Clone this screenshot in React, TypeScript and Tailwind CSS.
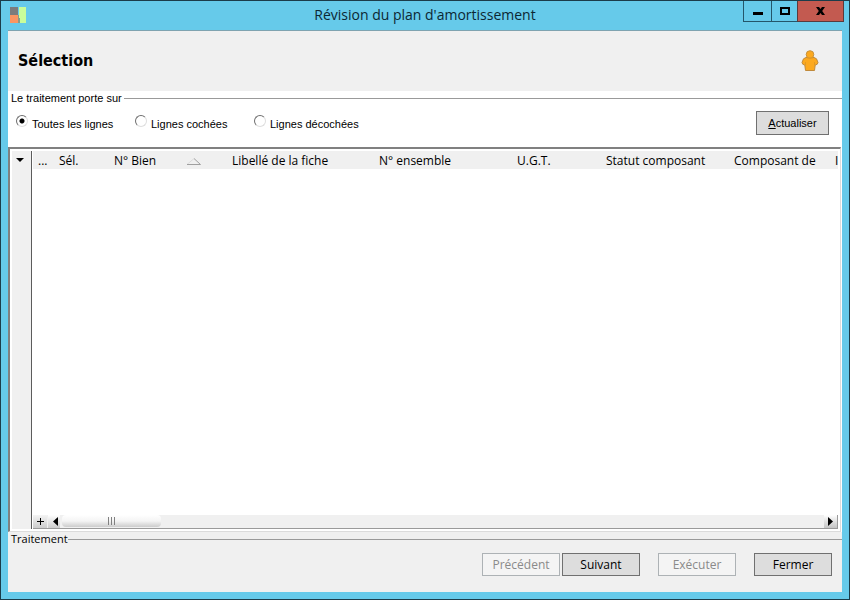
import { useState } from "react";
import type { ReactNode } from "react";

type WizardButtonProps = {
  children: ReactNode;
  disabled?: boolean;
};

const scopes = [
  { value: "all", label: "Toutes les lignes" },
  { value: "checked", label: "Lignes cochées" },
  { value: "unchecked", label: "Lignes décochées" },
];

const columns = [
  { label: "...", width: "w-[21px]" },
  { label: "Sél.", width: "w-[55px]" },
  { label: "N° Bien", width: "w-[118px]", sorted: true },
  { label: "Libellé de la fiche", width: "w-[147px]" },
  { label: "N° ensemble", width: "w-[138px]" },
  { label: "U.G.T.", width: "w-[89px]" },
  { label: "Statut composant", width: "w-[128px]" },
  { label: "Composant de", width: "w-[101px]" },
  { label: "I", width: "w-[100px]" },
];

function WizardButton({ children, disabled = false }: WizardButtonProps) {
  return (
    <button
      type="button"
      disabled={disabled}
      className="h-[23px] w-[78px] border border-[#707070] bg-[#dddddd] text-xs leading-4 text-black disabled:border-[#adb2b5] disabled:bg-[#f4f4f4] disabled:text-[#8a8a8a]"
    >
      {children}
    </button>
  );
}

function TitleBar() {
  return (
    <header className="grid h-[29px] grid-cols-[1fr_auto_1fr] items-start">
      <svg width="16" height="16" viewBox="0 0 16 16" className="mt-1.5 ml-[9px]" aria-hidden="true">
        <rect width="8" height="8" fill="#7c7c7c" />
        <rect y="8" width="8" height="8" fill="#fb9562" />
        <path d="M9 0h7v16h-6V11H9z" fill="#c9fd9a" />
        <path d="M8 8h1v3h1v5H8z" fill="#8d9a86" />
      </svg>

      <h1 className="pt-1 text-sm leading-5 text-[#0c2733]">
        Révision du plan d'amortissement
      </h1>

      <div className="mr-[5px] flex justify-end">
        <button type="button" aria-label="Réduire" className="flex h-[21px] w-[29px] justify-center border border-t-0 border-[#24566a]">
          <svg width="10" height="21" viewBox="0 0 10 21" aria-hidden="true">
            <path d="M0 11h10v3H0z" fill="#000" />
          </svg>
        </button>
        <button type="button" aria-label="Agrandir" className="flex h-[21px] w-[25px] justify-center border-b border-[#24566a]">
          <svg width="10" height="21" viewBox="0 0 10 21" aria-hidden="true">
            <path d="M0 6h10v8H0zM2 8v4h6V8z" fill="#000" fillRule="evenodd" />
          </svg>
        </button>
        <button type="button" aria-label="Fermer la fenêtre" className="flex h-[21px] w-[47px] justify-center border border-t-0 border-[#5a3a3c] bg-[#c35a50]">
          <svg width="9" height="21" viewBox="0 0 9 21" aria-hidden="true">
            <path d="M0 6h3l1.500 2L6 6h3L6.200 10 9 14H6l-1.500-2L3 14H0l2.800-4z" fill="#000" />
          </svg>
        </button>
      </div>
    </header>
  );
}

function UserIcon() {
  return (
    <svg width="18" height="22" viewBox="0 0 18 22" aria-hidden="true">
      <path
        d="M5 7.500L2.500 8.800 1 12.500l.8 1.800 2 .7.7 5.500h9l.7-5.500 2-.7.8-1.800-1.500-3.700L13 7.500z"
        fill="#fca91f"
        stroke="#c08a3c"
      />
      <circle cx="9" cy="4.500" r="3.800" fill="#fca91f" stroke="#c8923c" />
      <path d="M6 8h6" stroke="#e59a20" />
      <path d="M4.500 12v3M13.500 12v3" stroke="#e09a28" fill="none" />
    </svg>
  );
}

function ScopeSelector() {
  const [scope, setScope] = useState("all");

  return (
    <fieldset className="min-w-0 border-t border-[#9a9a9a] font-['Liberation_Sans',sans-serif] text-[11px] leading-[14px]">
      <legend className="pr-0.5 pl-[3px]">Le traitement porte sur</legend>

      <div className="flex items-start justify-between pt-1.5 pr-[13px] pb-3 pl-2">
        <div className="flex pt-1">
          {scopes.map(({ value, label }) => (
            <label key={value} className="flex w-[119px] items-start gap-1">
              <input
                type="radio"
                name="scope"
                value={value}
                checked={scope === value}
                onChange={() => setScope(value)}
                className="h-3 w-3 shrink-0 appearance-none rounded-full border border-t-[#6e6e6e] border-r-[#dedede] border-b-[#dedede] border-l-[#6e6e6e] bg-white checked:bg-[radial-gradient(circle,#000_2px,#fff_3px)]"
              />
              <span className="pt-0.5 whitespace-nowrap">{label}</span>
            </label>
          ))}
        </div>

        <button type="button" className="h-6 w-[73px] border border-[#707070] bg-[#dddddd]">
          <span className="underline">A</span>ctualiser
        </button>
      </div>
    </fieldset>
  );
}

function ScrollBar() {
  return (
    <div className="flex h-3.5 border-b border-[#9a9a9a] bg-[#f0f0f0]">
      <button type="button" aria-label="Ajouter" className="flex w-3.5 items-center justify-center bg-linear-to-b from-[#f4f4f4] to-[#cccccc]">
        <svg width="7" height="7" viewBox="0 0 7 7" aria-hidden="true">
          <path d="M3 0h1v3h3v1H4v3H3V4H0V3h3z" fill="#000" />
        </svg>
      </button>
      <button type="button" aria-label="Défiler à gauche" className="ml-px flex w-3 items-center justify-end bg-linear-to-b from-white to-[#cccccc] pr-0.5">
        <svg width="5" height="9" viewBox="0 0 5 9" aria-hidden="true">
          <path d="M5 0v9L0 4.500z" fill="#000" />
        </svg>
      </button>
      <div className="flex flex-1 pl-0.5">
        <div className="mb-px flex w-[99px] items-center justify-center gap-0.5 rounded-sm bg-linear-to-b from-white via-[#f4f4f4] to-[#cccccc]">
          <span className="h-2 w-px bg-[#808080]" />
          <span className="h-2 w-px bg-[#808080]" />
          <span className="h-2 w-px bg-[#808080]" />
        </div>
      </div>
      <button type="button" aria-label="Défiler à droite" className="flex w-3.5 items-center justify-center border-r border-[#9a9a9a] bg-linear-to-b from-white to-[#c4c4c4]">
        <svg width="5" height="9" viewBox="0 0 5 9" aria-hidden="true">
          <path d="M0 0v9l5-4.500z" fill="#000" />
        </svg>
      </button>
    </div>
  );
}

function AssetGrid() {
  return (
    <section className="mr-px flex min-h-0 flex-1 border-t-2 border-r border-b border-l-2 border-t-[#808080] border-r-[#dcdcdc] border-b-[#dcdcdc] border-l-[#808080] bg-white p-0.5">
      {/* Row selector gutter */}
      <div className="w-5 shrink-0 border-r border-[#5c5c5c] bg-[#f0f0f0] pt-[7px]">
        <button type="button" aria-label="Options de la liste" className="flex w-full pl-1">
          <svg width="8" height="4" viewBox="0 0 8 4" aria-hidden="true">
            <path d="M0 0h8L4 4z" fill="#000" />
          </svg>
        </button>
      </div>

      <div className="flex min-w-0 flex-1 flex-col pl-px">
        <div className="min-h-0 flex-1 overflow-hidden">
          <table className="w-max table-fixed border-collapse text-xs leading-4">
            <thead className="bg-[#f0f0f0]">
              <tr>
                {columns.map(({ label, width, sorted }) => (
                  <th key={label} scope="col" className={`${width} p-0 pt-0.5 pl-[5px] text-left font-normal whitespace-nowrap`}>
                    <span className="flex items-center justify-between">
                      {label}
                      {sorted && (
                        <svg width="14" height="7" viewBox="0 0 14 7" className="mr-[26px]" aria-hidden="true">
                          <path d="M0 6.500L7 .5" stroke="#dcdcdc" />
                          <path d="M7 .5l6.500 6H0" stroke="#a0a0a0" fill="none" />
                        </svg>
                      )}
                    </span>
                  </th>
                ))}
              </tr>
            </thead>
            <tbody />
          </table>
        </div>
        <ScrollBar />
      </div>
    </section>
  );
}

function WizardFooter() {
  return (
    <fieldset className="min-w-0 border-t border-[#9a9a9a]">
      <legend className="pl-[3px] text-[11px] leading-[14px]">Traitement</legend>

      <div className="flex justify-end gap-[18px] pt-[7px] pr-2.5 pb-4">
        <div className="flex gap-0.5">
          <WizardButton disabled>Précédent</WizardButton>
          <WizardButton>Suivant</WizardButton>
        </div>
        <WizardButton disabled>Exécuter</WizardButton>
        <WizardButton>Fermer</WizardButton>
      </div>
    </fieldset>
  );
}

export default function App() {
  return (
    <div className="flex h-screen flex-col border border-[#1b3c4a] bg-[#66caea] font-['Open_Sans',sans-serif] text-black">
      <TitleBar />

      <main className="mx-[7px] mb-[7px] flex min-h-0 flex-1 flex-col border-t border-[#7fa3b0] bg-[#f0f0f0]">
        <div className="flex h-[60px] items-center justify-between pr-[23px] pl-2.5">
          <h2 className="font-['DejaVu_Sans_Condensed','DejaVu_Sans',sans-serif] text-base font-bold">Sélection</h2>
          <UserIcon />
        </div>

        <div className="flex min-h-0 flex-1 flex-col bg-white">
          <ScopeSelector />
          <AssetGrid />
        </div>

        <WizardFooter />
      </main>
    </div>
  );
}
